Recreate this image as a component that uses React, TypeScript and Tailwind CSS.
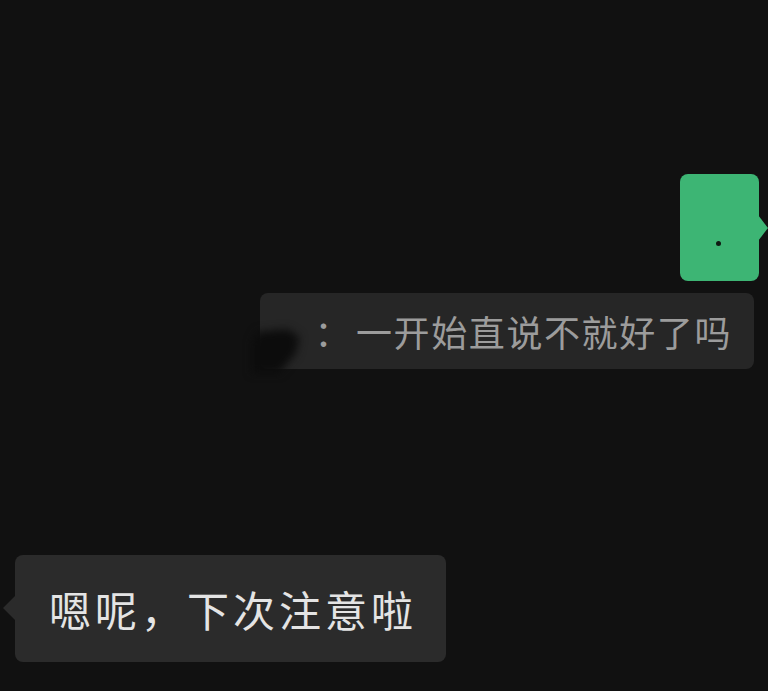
import React from "react";

export default function App() {
  const cjk = { fontFamily: '"Noto Sans CJK SC", "Noto Sans", sans-serif' };
  return (
    <div className="w-[768px] h-[691px] bg-[#111111] overflow-hidden flex flex-col" style={cjk}>
      {/* green bubble */}
      <div className="flex justify-end pr-[9px] pt-[174px]">
        <div className="relative w-[79px] h-[107px] rounded-[8px] bg-[#3db574]">
          <div className="absolute right-[-9px] top-[41px] w-0 h-0 border-y-[13px] border-y-transparent border-l-[10px] border-l-[#3db574]" />
          <div className="absolute left-[36px] top-[67px] w-[5px] h-[5px] rounded-full bg-[#0f1a12]" />
        </div>
      </div>

      {/* quote bubble */}
      <div className="flex justify-end pr-[14px] mt-[12px]">
        <div className="relative w-[494px] h-[76px] rounded-[8px] bg-[#262626] flex items-center justify-end pr-[22px]">
          <span className="text-[36px] leading-none text-[#9c9c9c] tracking-[1.6px] mr-[4px]">：</span>
          <span className="text-[36px] leading-none text-[#9c9c9c] tracking-[1.6px]">一开始直说不就好了吗</span>
          <div className="absolute left-[-8px] top-[30px] w-[50px] h-[50px] blur-[4px]">
            <div className="w-full h-full bg-[#0c0c0c] [clip-path:polygon(10%_18%,70%_12%,95%_28%,88%_60%,55%_100%,0_100%,0_40%)]" />
          </div>
        </div>
      </div>

      {/* bottom bubble */}
      <div className="flex pl-[15px] mt-[186px]">
        <div className="relative w-[431px] h-[107px] rounded-[8px] bg-[#2b2b2b] flex items-center pl-[34px]">
          <div className="absolute left-[-12px] top-[41px] w-0 h-0 border-y-[12px] border-y-transparent border-r-[12px] border-r-[#2b2b2b]" />
          <span className="text-[42px] leading-none text-[#e4e4e4] tracking-[4px]">嗯呢，下次注意啦</span>
        </div>
      </div>
    </div>
  );
}
